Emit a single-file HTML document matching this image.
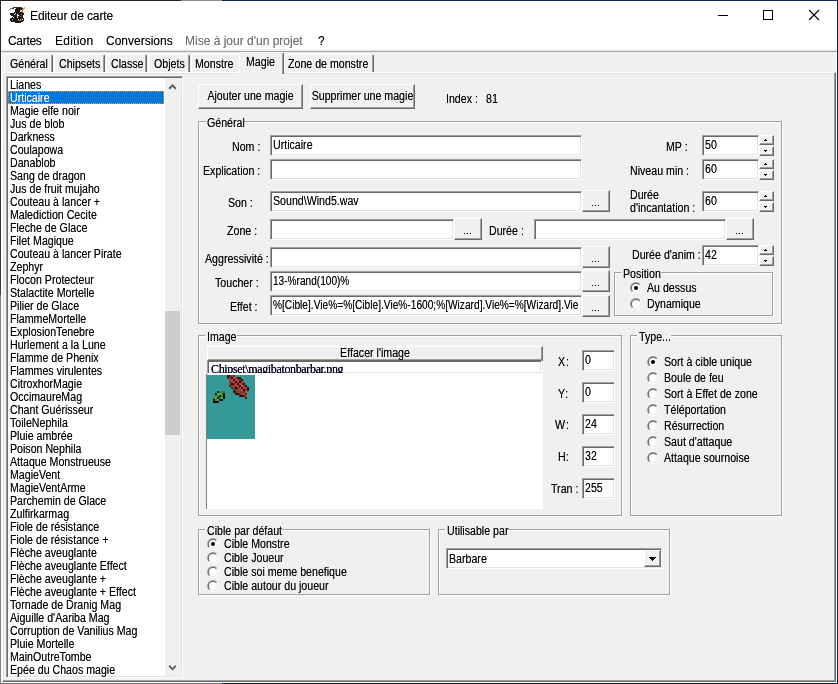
<!DOCTYPE html>
<html>
<head>
<meta charset="utf-8">
<title>Editeur de carte</title>
<style>
html,body{margin:0;padding:0;}
body{will-change:transform;width:838px;height:684px;overflow:hidden;position:relative;background:#f0f0f0;font-family:"Liberation Sans",sans-serif;color:#000;}
div,span{box-sizing:border-box;}
.a{position:absolute;}
/* text: emulate MS Sans Serif 8pt (taller & narrower than Liberation Sans) */
.t{position:absolute;white-space:pre;font-size:12.5px;line-height:13px;height:13px;transform:scaleX(.85);transform-origin:0 0;color:#000;text-shadow:0 0 0 rgba(0,0,0,.55);}
.tr{transform-origin:100% 0;}
/* sunken field */
.f{position:absolute;background:#fff;border:1px solid;border-color:#a0a0a0 #fff #fff #a0a0a0;box-shadow:inset 1px 1px 0 #696969,inset -1px -1px 0 #e3e3e3;overflow:hidden;}
.f .t{left:2px;top:3px;}
/* raised button */
.b{position:absolute;background:#f0f0f0;border:1px solid;border-color:#fff #696969 #696969 #fff;box-shadow:inset -1px -1px 0 #a0a0a0;overflow:hidden;}
.b .c{position:absolute;left:0;top:0;width:117.65%;text-align:center;transform:scaleX(.85);transform-origin:0 0;font-size:12.5px;line-height:13px;white-space:pre;text-shadow:0 0 0 rgba(0,0,0,.55);}
.dots{position:absolute;left:9px;top:14px;width:1px;height:1px;background:#000;box-shadow:3px 0 #000,6px 0 #000;}
/* etched group box */
.g{position:absolute;border:1px solid #a0a0a0;box-shadow:1px 1px 0 #fff,inset 1px 1px 0 #fff;}
.gl{position:absolute;background:#f0f0f0;height:13px;top:-8px;}
/* radio */
.r{position:absolute;width:12px;height:12px;border-radius:50%;background:linear-gradient(135deg,#a0a0a0 50%,#fff 50%);}
.r:before{content:"";position:absolute;left:1px;top:1px;width:10px;height:10px;border-radius:50%;background:linear-gradient(135deg,#696969 50%,#e3e3e3 50%);}
.r:after{content:"";position:absolute;left:2px;top:2px;width:8px;height:8px;border-radius:50%;background:#fff;}
.r i{position:absolute;left:4px;top:4px;width:4px;height:4px;border-radius:50%;background:#000;z-index:2;}
</style>
</head>
<body>
<!-- window frame -->
<div class="a" style="left:0;top:0;width:838px;height:1px;z-index:50;background:linear-gradient(to right,#2a2320 0,#2a2320 181px,#8c8c8c 181px,#8c8c8c 222px,#0d2759 222px)"></div>
<div class="a" style="left:0;top:683px;width:838px;height:1px;z-index:50;background:linear-gradient(to right,#707070 0,#707070 222px,#0b1f4b 222px)"></div>
<div class="a" style="left:0;top:0;width:1px;height:684px;z-index:50;background:linear-gradient(to bottom,#2c2420 0,#4a3c34 295px,#7f7f7f 295px)"></div>
<div class="a" style="left:837px;top:0;width:1px;height:684px;z-index:50;background:#0b1f4b"></div>
<!-- title + menu -->
<div class="a" style="left:1px;top:1px;width:836px;height:50px;background:#fff"></div>
<div class="a" style="left:1px;top:49px;width:836px;height:2px;background:#f0f0f0"></div>
<div class="a" style="left:1px;top:51px;width:836px;height:1px;background:#a0a0a0"></div>
<div class="a" id="title" style="left:30px;top:8px;font-size:12px;line-height:16px;white-space:pre;text-shadow:0 0 0 rgba(0,0,0,.45);letter-spacing:-0.1px">Editeur de carte</div>
<div class="a" style="left:8px;top:33px;font-size:12px;line-height:16px;white-space:pre;text-shadow:0 0 0 rgba(0,0,0,.45);letter-spacing:-0.3px">Cartes</div>
<div class="a" style="left:55px;top:33px;font-size:12px;line-height:16px;white-space:pre;text-shadow:0 0 0 rgba(0,0,0,.45);letter-spacing:0.25px">Edition</div>
<div class="a" style="left:106px;top:33px;font-size:12px;line-height:16px;white-space:pre;text-shadow:0 0 0 rgba(0,0,0,.45)">Conversions</div>
<div class="a" style="left:185px;top:33px;font-size:12px;line-height:16px;white-space:pre;text-shadow:0 0 0 rgba(109,109,109,.4);color:#6d6d6d">Mise à jour d'un projet</div>
<div class="a" style="left:318px;top:33px;font-size:12px;line-height:16px;white-space:pre;text-shadow:0 0 0 rgba(0,0,0,.45)">?</div>

<!-- window controls -->
<svg class="a" style="left:700px;top:0" width="138" height="31" viewBox="0 0 138 31" shape-rendering="crispEdges">
<rect x="18" y="15" width="10" height="1" fill="#000"/>
<rect x="63.5" y="10.5" width="9" height="9" fill="none" stroke="#000" stroke-width="1"/>
<g shape-rendering="auto" stroke="#000" stroke-width="1.1"><line x1="109" y1="10" x2="119" y2="20"/><line x1="119" y1="10" x2="109" y2="20"/></g>
</svg>
<!-- app icon -->
<svg class="a" style="left:9px;top:7px" width="16" height="16" viewBox="0 0 16 16" shape-rendering="crispEdges">
<rect x="4" y="0" width="9" height="1" fill="#4f2a14"/>
<rect x="15" y="0" width="1" height="1" fill="#f5a31f"/>
<rect x="1" y="1" width="2" height="1" fill="#8e8682"/>
<rect x="3" y="1" width="2" height="1" fill="#3a3431"/>
<rect x="7" y="1" width="6" height="1" fill="#1d1a19"/>
<rect x="13" y="1" width="1" height="1" fill="#3a3431"/>
<rect x="14" y="1" width="2" height="1" fill="#f5a31f"/>
<rect x="0" y="2" width="1" height="1" fill="#b9b3b0"/>
<rect x="1" y="2" width="1" height="1" fill="#8e8682"/>
<rect x="6" y="2" width="7" height="1" fill="#1d1a19"/>
<rect x="13" y="2" width="2" height="1" fill="#f5a31f"/>
<rect x="6" y="3" width="5" height="1" fill="#1d1a19"/>
<rect x="11" y="3" width="1" height="1" fill="#d8d4d2"/>
<rect x="12" y="3" width="1" height="1" fill="#ffffff"/>
<rect x="13" y="3" width="1" height="1" fill="#c56a1a"/>
<rect x="6" y="4" width="5" height="1" fill="#1d1a19"/>
<rect x="11" y="4" width="1" height="1" fill="#ffffff"/>
<rect x="12" y="4" width="1" height="1" fill="#d8d4d2"/>
<rect x="13" y="4" width="1" height="1" fill="#c56a1a"/>
<rect x="5" y="5" width="8" height="1" fill="#1d1a19"/>
<rect x="13" y="5" width="1" height="1" fill="#3a3431"/>
<rect x="1" y="6" width="5" height="1" fill="#1d1a19"/>
<rect x="6" y="6" width="1" height="1" fill="#ffffff"/>
<rect x="7" y="6" width="8" height="1" fill="#1d1a19"/>
<rect x="1" y="7" width="4" height="1" fill="#1d1a19"/>
<rect x="5" y="7" width="1" height="1" fill="#d8d4d2"/>
<rect x="6" y="7" width="2" height="1" fill="#1d1a19"/>
<rect x="8" y="7" width="1" height="1" fill="#ffffff"/>
<rect x="9" y="7" width="3" height="1" fill="#1d1a19"/>
<rect x="12" y="7" width="1" height="1" fill="#c56a1a"/>
<rect x="13" y="7" width="2" height="1" fill="#1d1a19"/>
<rect x="2" y="8" width="6" height="1" fill="#1d1a19"/>
<rect x="8" y="8" width="2" height="1" fill="#ffffff"/>
<rect x="10" y="8" width="4" height="1" fill="#1d1a19"/>
<rect x="4" y="9" width="4" height="1" fill="#1d1a19"/>
<rect x="8" y="9" width="1" height="1" fill="#d8d4d2"/>
<rect x="9" y="9" width="2" height="1" fill="#1d1a19"/>
<rect x="11" y="9" width="1" height="1" fill="#c56a1a"/>
<rect x="12" y="9" width="1" height="1" fill="#1d1a19"/>
<rect x="13" y="9" width="1" height="1" fill="#3a3431"/>
<rect x="3" y="10" width="1" height="1" fill="#1d1a19"/>
<rect x="4" y="10" width="1" height="1" fill="#d8d4d2"/>
<rect x="5" y="10" width="3" height="1" fill="#1d1a19"/>
<rect x="8" y="10" width="1" height="1" fill="#d8d4d2"/>
<rect x="9" y="10" width="5" height="1" fill="#1d1a19"/>
<rect x="1" y="11" width="14" height="1" fill="#1d1a19"/>
<rect x="1" y="12" width="2" height="1" fill="#1d1a19"/>
<rect x="3" y="12" width="1" height="1" fill="#d8d4d2"/>
<rect x="4" y="12" width="5" height="1" fill="#1d1a19"/>
<rect x="9" y="12" width="1" height="1" fill="#ffffff"/>
<rect x="10" y="12" width="1" height="1" fill="#1d1a19"/>
<rect x="11" y="12" width="2" height="1" fill="#c56a1a"/>
<rect x="13" y="12" width="1" height="1" fill="#ffffff"/>
<rect x="14" y="12" width="1" height="1" fill="#1d1a19"/>
<rect x="1" y="13" width="9" height="1" fill="#1d1a19"/>
<rect x="10" y="13" width="2" height="1" fill="#c56a1a"/>
<rect x="12" y="13" width="3" height="1" fill="#1d1a19"/>
<rect x="2" y="14" width="12" height="1" fill="#1d1a19"/>
<rect x="6" y="15" width="6" height="1" fill="#1d1a19"/>
</svg>
<!-- tab panel frame -->
<div class="a" style="left:1px;top:52px;width:1px;height:631px;background:#fff"></div>
<div class="a" style="left:836px;top:52px;width:1px;height:631px;background:#fff"></div>
<div class="a" style="left:1px;top:682px;width:836px;height:1px;background:#fff"></div>
<div class="a" style="left:2px;top:72px;width:834px;height:610px;border:1px solid;border-color:#fff #696969 #696969 #fff;box-shadow:inset -1px -1px 0 #a0a0a0,inset 1px 1px 0 #e3e3e3"></div>
<!-- tabs -->
<style>
.tb{position:absolute;top:54px;height:18px;border:1px solid;border-color:#fff #696969 transparent #fff;border-bottom:0;box-shadow:inset -1px 0 0 #a0a0a0;border-radius:2px 2px 0 0;background:#f0f0f0;}
.tb .t{top:3px;}
</style>
<div class="tb" style="left:4px;width:49px"><span class="t" style="left:5px">Général</span></div>
<div class="tb" style="left:54px;width:51px"><span class="t" style="left:4px">Chipsets</span></div>
<div class="tb" style="left:106px;width:41px"><span class="t" style="left:4px">Classe</span></div>
<div class="tb" style="left:148px;width:42px"><span class="t" style="left:5px">Objets</span></div>
<div class="tb" style="left:191px;width:50px"><span class="t" style="left:3px">Monstre</span></div>
<div class="tb" style="left:284px;width:90px"><span class="t" style="left:3px">Zone de monstre</span></div>
<div class="tb" style="left:239px;width:45px;top:52px;height:22px"><span class="t" style="left:6px">Magie</span></div>

<!-- list box -->
<style>
.li{position:relative;height:13px;width:156px;}
.li .t{left:2px;top:1px;}
.sel{background:#0078d7;outline:1px dotted #ff9a2e;outline-offset:-1px;}
.sel .t{color:#fff;text-shadow:0 0 0 rgba(255,255,255,.55);}
</style>
<div class="f" style="left:6px;top:76px;width:177px;height:602px">
<div class="a" style="left:1px;top:1px;width:157px;height:598px">
<div class="li"><span class="t">Lianes</span></div>
<div class="li sel"><span class="t">Urticaire</span></div>
<div class="li"><span class="t">Magie elfe noir</span></div>
<div class="li"><span class="t">Jus de blob</span></div>
<div class="li"><span class="t">Darkness</span></div>
<div class="li"><span class="t">Coulapowa</span></div>
<div class="li"><span class="t">Danablob</span></div>
<div class="li"><span class="t">Sang de dragon</span></div>
<div class="li"><span class="t">Jus de fruit mujaho</span></div>
<div class="li"><span class="t">Couteau à lancer +</span></div>
<div class="li"><span class="t">Malediction Cecite</span></div>
<div class="li"><span class="t">Fleche de Glace</span></div>
<div class="li"><span class="t">Filet Magique</span></div>
<div class="li"><span class="t">Couteau à lancer Pirate</span></div>
<div class="li"><span class="t">Zephyr</span></div>
<div class="li"><span class="t">Flocon Protecteur</span></div>
<div class="li"><span class="t">Stalactite Mortelle</span></div>
<div class="li"><span class="t">Pilier de Glace</span></div>
<div class="li"><span class="t">FlammeMortelle</span></div>
<div class="li"><span class="t">ExplosionTenebre</span></div>
<div class="li"><span class="t">Hurlement a la Lune</span></div>
<div class="li"><span class="t">Flamme de Phenix</span></div>
<div class="li"><span class="t">Flammes virulentes</span></div>
<div class="li"><span class="t">CitroxhorMagie</span></div>
<div class="li"><span class="t">OccimaureMag</span></div>
<div class="li"><span class="t">Chant Guérisseur</span></div>
<div class="li"><span class="t">ToileNephila</span></div>
<div class="li"><span class="t">Pluie ambrée</span></div>
<div class="li"><span class="t">Poison Nephila</span></div>
<div class="li"><span class="t">Attaque Monstrueuse</span></div>
<div class="li"><span class="t">MagieVent</span></div>
<div class="li"><span class="t">MagieVentArme</span></div>
<div class="li"><span class="t">Parchemin de Glace</span></div>
<div class="li"><span class="t">Zulfirkarmag</span></div>
<div class="li"><span class="t">Fiole de résistance</span></div>
<div class="li"><span class="t">Fiole de résistance +</span></div>
<div class="li"><span class="t">Flèche aveuglante</span></div>
<div class="li"><span class="t">Flèche aveuglante Effect</span></div>
<div class="li"><span class="t">Flèche aveuglante +</span></div>
<div class="li"><span class="t">Flèche aveuglante + Effect</span></div>
<div class="li"><span class="t">Tornade de Dranig Mag</span></div>
<div class="li"><span class="t">Aiguille d'Aariba Mag</span></div>
<div class="li"><span class="t">Corruption de Vanilius Mag</span></div>
<div class="li"><span class="t">Pluie Mortelle</span></div>
<div class="li"><span class="t">MainOutreTombe</span></div>
<div class="li"><span class="t">Epée du Chaos magie</span></div>
</div>
<div class="a" style="left:158px;top:1px;width:16px;height:598px;background:#f0f0f0">
<div class="a" style="left:0;top:233px;width:15px;height:124px;background:#cdcdcd"></div>
<svg class="a" style="left:0;top:0" width="16" height="17" viewBox="0 0 16 17"><polygon points="7.5,6 11.5,10 10.3,11.6 7.5,8.7 4.7,11.6 3.5,10" fill="#5c5c5c"/></svg>
<svg class="a" style="left:0;top:581px" width="16" height="17" viewBox="0 0 16 17"><polygon points="3.5,7.6 4.7,6 7.5,8.9 10.3,6 11.5,7.6 7.5,11.6" fill="#5c5c5c"/></svg>
</div>
</div>

<!-- top buttons -->
<div class="b" style="left:198px;top:84px;width:105px;height:25px"><span class="c" style="top:5px">Ajouter une magie</span></div>
<div class="b" style="left:310px;top:84px;width:105px;height:25px"><span class="c" style="top:5px">Supprimer une magie</span></div>
<span class="t" style="left:446px;top:93px">Index :</span>
<span class="t" style="left:486px;top:93px">81</span>

<!-- group: General -->
<div class="g" style="left:198px;top:121px;width:584px;height:203px"></div>
<div class="gl a" style="left:206px;top:116px;width:38px"></div>
<span class="t" style="left:207px;top:117px">Général</span>

<span class="t" style="left:232px;top:141px">Nom :</span>
<div class="f" style="left:270px;top:135px;width:312px;height:21px"><span class="t">Urticaire</span></div>
<span class="t" style="left:203px;top:165px">Explication :</span>
<div class="f" style="left:270px;top:159px;width:312px;height:21px"></div>
<span class="t" style="left:228px;top:197px">Son :</span>
<div class="f" style="left:270px;top:191px;width:312px;height:21px"><span class="t">Sound\Wind5.wav</span></div>
<div class="b" style="left:582px;top:190px;width:28px;height:22px"><i class="dots"></i></div>
<span class="t" style="left:227px;top:225px">Zone :</span>
<div class="f" style="left:270px;top:219px;width:184px;height:21px"></div>
<div class="b" style="left:454px;top:218px;width:28px;height:22px"><i class="dots"></i></div>
<span class="t" style="left:489px;top:225px">Durée :</span>
<div class="f" style="left:534px;top:219px;width:192px;height:21px"></div>
<div class="b" style="left:726px;top:218px;width:28px;height:22px"><i class="dots"></i></div>
<span class="t" style="left:205px;top:253px">Aggressivité :</span>
<div class="f" style="left:270px;top:247px;width:312px;height:21px"></div>
<div class="b" style="left:582px;top:246px;width:28px;height:22px"><i class="dots"></i></div>
<span class="t" style="left:215px;top:277px">Toucher :</span>
<div class="f" style="left:270px;top:271px;width:312px;height:21px"><span class="t" style="transform:scaleX(.808)">13-%rand(100)%</span></div>
<div class="b" style="left:582px;top:270px;width:28px;height:22px"><i class="dots"></i></div>
<span class="t" style="left:230px;top:301px">Effet :</span>
<div class="f" style="left:270px;top:295px;width:312px;height:21px"><span class="t" style="transform:scaleX(.813)">%[Cible].Vie%=%[Cible].Vie%-1600;%[Wizard].Vie%=%[Wizard].Vie</span></div>
<div class="b" style="left:582px;top:295px;width:28px;height:22px"><i class="dots"></i></div>

<!-- right column -->
<style>
.sp{position:absolute;width:15px;}
.sp .b{left:0;width:15px;height:10px;}
.sp .b:after{content:"";position:absolute;left:5px;width:1px;height:1px;background:#000;}
.sp .u:after{top:3px;box-shadow:-1px 1px #000,0 1px #000,1px 1px #000;}
.sp .d:after{top:4px;box-shadow:-1px -1px #000,0 -1px #000,1px -1px #000;}
</style>
<span class="t" style="left:666px;top:141px">MP :</span>
<div class="f" style="left:702px;top:135px;width:57px;height:21px"><span class="t">50</span></div>
<div class="sp" style="left:759px;top:135px"><div class="b u" style="top:0"></div><div class="b d" style="top:11px"></div></div>
<span class="t" style="left:630px;top:165px">Niveau min :</span>
<div class="f" style="left:702px;top:159px;width:57px;height:21px"><span class="t">60</span></div>
<div class="sp" style="left:759px;top:159px"><div class="b u" style="top:0"></div><div class="b d" style="top:11px"></div></div>
<span class="t" style="left:630px;top:189px">Durée</span>
<span class="t" style="left:630px;top:202px">d'incantation :</span>
<div class="f" style="left:702px;top:191px;width:57px;height:21px"><span class="t">60</span></div>
<div class="sp" style="left:759px;top:191px"><div class="b u" style="top:0"></div><div class="b d" style="top:11px"></div></div>
<span class="t" style="left:632px;top:249px">Durée d'anim :</span>
<div class="f" style="left:702px;top:245px;width:57px;height:21px"><span class="t">42</span></div>
<div class="sp" style="left:759px;top:245px"><div class="b u" style="top:0"></div><div class="b d" style="top:11px"></div></div>

<div class="g" style="left:614px;top:272px;width:159px;height:44px"></div>
<div class="gl a" style="left:621px;top:267px;width:40px"></div>
<span class="t" style="left:623px;top:268px">Position</span>
<div class="r" style="left:630px;top:282px"><i></i></div>
<span class="t" style="left:647px;top:282px">Au dessus</span>
<div class="r" style="left:630px;top:298px"></div>
<span class="t" style="left:647px;top:298px">Dynamique</span>

<!-- group: Image -->
<div class="g" style="left:198px;top:335px;width:424px;height:181px"></div>
<div class="gl a" style="left:205px;top:330px;width:32px"></div>
<span class="t" style="left:207px;top:331px">Image</span>
<div class="a" style="left:206px;top:374px;width:337px;height:135px;background:#fff;border-left:1px solid #808080"></div>
<div class="b" style="left:207px;top:346px;width:336px;height:15px"><span class="c" style="top:0px">Effacer l'image</span></div>
<div class="f" style="left:207px;top:360px;width:335px;height:14px;border-top-color:#696969"><span class="a" style="left:3px;top:1px;font-family:'Liberation Serif',serif;font-size:12px;line-height:15px;white-space:pre;color:#00001a;letter-spacing:-0.35px;text-shadow:0 0 0 #00002a">Chipset\magibatonbarbar.png</span></div>
<!-- sprite -->
<svg class="a" style="left:207px;top:375px" width="48" height="64" viewBox="0 0 24 32" shape-rendering="crispEdges">
<rect width="24" height="32" fill="#339999"/>
<rect x="10" y="0" width="1" height="1" fill="#4a0808"/>
<rect x="11" y="0" width="1" height="1" fill="#3f3a08"/>
<rect x="12" y="0" width="1" height="1" fill="#8c3c44"/>
<rect x="13" y="0" width="1" height="1" fill="#3f3a08"/>
<rect x="10" y="1" width="1" height="1" fill="#3f3a08"/>
<rect x="11" y="1" width="1" height="1" fill="#8c3c44"/>
<rect x="12" y="1" width="1" height="1" fill="#2a0000"/>
<rect x="13" y="1" width="1" height="1" fill="#d24444"/>
<rect x="14" y="1" width="1" height="1" fill="#8c3c44"/>
<rect x="15" y="1" width="2" height="1" fill="#4a0808"/>
<rect x="11" y="2" width="1" height="1" fill="#8c3c44"/>
<rect x="12" y="2" width="1" height="1" fill="#d24444"/>
<rect x="13" y="2" width="1" height="1" fill="#2a0000"/>
<rect x="14" y="2" width="1" height="1" fill="#d24444"/>
<rect x="15" y="2" width="1" height="1" fill="#8c3c44"/>
<rect x="16" y="2" width="1" height="1" fill="#3f3a08"/>
<rect x="17" y="2" width="1" height="1" fill="#4a0808"/>
<rect x="11" y="3" width="2" height="1" fill="#8c3c44"/>
<rect x="13" y="3" width="1" height="1" fill="#d24444"/>
<rect x="14" y="3" width="1" height="1" fill="#2a0000"/>
<rect x="15" y="3" width="1" height="1" fill="#d24444"/>
<rect x="16" y="3" width="1" height="1" fill="#2a0000"/>
<rect x="17" y="3" width="1" height="1" fill="#8c3c44"/>
<rect x="18" y="3" width="1" height="1" fill="#d24444"/>
<rect x="11" y="4" width="1" height="1" fill="#8c3c44"/>
<rect x="12" y="4" width="1" height="1" fill="#2a0000"/>
<rect x="13" y="4" width="1" height="1" fill="#3f3a08"/>
<rect x="14" y="4" width="1" height="1" fill="#d24444"/>
<rect x="15" y="4" width="1" height="1" fill="#2a0000"/>
<rect x="16" y="4" width="1" height="1" fill="#d24444"/>
<rect x="17" y="4" width="1" height="1" fill="#8c3c44"/>
<rect x="18" y="4" width="1" height="1" fill="#2a0000"/>
<rect x="11" y="5" width="1" height="1" fill="#3f3a08"/>
<rect x="12" y="5" width="3" height="1" fill="#8c3c44"/>
<rect x="15" y="5" width="1" height="1" fill="#d24444"/>
<rect x="16" y="5" width="1" height="1" fill="#2a0000"/>
<rect x="17" y="5" width="1" height="1" fill="#d24444"/>
<rect x="18" y="5" width="1" height="1" fill="#8c3c44"/>
<rect x="19" y="5" width="1" height="1" fill="#4a0808"/>
<rect x="12" y="6" width="1" height="1" fill="#3f3a08"/>
<rect x="13" y="6" width="1" height="1" fill="#8c3c44"/>
<rect x="14" y="6" width="1" height="1" fill="#2a0000"/>
<rect x="15" y="6" width="1" height="1" fill="#3f3a08"/>
<rect x="16" y="6" width="1" height="1" fill="#d24444"/>
<rect x="17" y="6" width="1" height="1" fill="#2a0000"/>
<rect x="18" y="6" width="1" height="1" fill="#d24444"/>
<rect x="19" y="6" width="1" height="1" fill="#8c3c44"/>
<rect x="20" y="6" width="1" height="1" fill="#4a0808"/>
<rect x="13" y="7" width="1" height="1" fill="#3f3a08"/>
<rect x="14" y="7" width="3" height="1" fill="#8c3c44"/>
<rect x="17" y="7" width="1" height="1" fill="#d24444"/>
<rect x="18" y="7" width="1" height="1" fill="#2a0000"/>
<rect x="19" y="7" width="1" height="1" fill="#8c3c44"/>
<rect x="20" y="7" width="1" height="1" fill="#4a0808"/>
<rect x="5" y="8" width="1" height="1" fill="#2a1030"/>
<rect x="6" y="8" width="3" height="1" fill="#4a7d33"/>
<rect x="13" y="8" width="1" height="1" fill="#4a0808"/>
<rect x="14" y="8" width="1" height="1" fill="#3f3a08"/>
<rect x="15" y="8" width="3" height="1" fill="#8c3c44"/>
<rect x="18" y="8" width="1" height="1" fill="#3f3a08"/>
<rect x="19" y="8" width="1" height="1" fill="#d24444"/>
<rect x="4" y="9" width="1" height="1" fill="#2a1030"/>
<rect x="5" y="9" width="2" height="1" fill="#33c446"/>
<rect x="7" y="9" width="1" height="1" fill="#4a7d33"/>
<rect x="8" y="9" width="1" height="1" fill="#2a1030"/>
<rect x="14" y="9" width="2" height="1" fill="#4a0808"/>
<rect x="16" y="9" width="1" height="1" fill="#3f3a08"/>
<rect x="17" y="9" width="1" height="1" fill="#8c3c44"/>
<rect x="18" y="9" width="1" height="1" fill="#d24444"/>
<rect x="19" y="9" width="1" height="1" fill="#3f3a08"/>
<rect x="4" y="10" width="2" height="1" fill="#4a7d33"/>
<rect x="6" y="10" width="1" height="1" fill="#2a1030"/>
<rect x="7" y="10" width="1" height="1" fill="#4a7d33"/>
<rect x="8" y="10" width="1" height="1" fill="#000000"/>
<rect x="16" y="10" width="3" height="1" fill="#4a0808"/>
<rect x="19" y="10" width="1" height="1" fill="#d24444"/>
<rect x="3" y="11" width="1" height="1" fill="#4a7d33"/>
<rect x="4" y="11" width="1" height="1" fill="#33c446"/>
<rect x="5" y="11" width="1" height="1" fill="#2a1030"/>
<rect x="6" y="11" width="1" height="1" fill="#4a7d33"/>
<rect x="7" y="11" width="1" height="1" fill="#33c446"/>
<rect x="8" y="11" width="1" height="1" fill="#000000"/>
<rect x="19" y="11" width="1" height="1" fill="#4a0808"/>
<rect x="3" y="12" width="1" height="1" fill="#2a1030"/>
<rect x="4" y="12" width="1" height="1" fill="#4a7d33"/>
<rect x="5" y="12" width="1" height="1" fill="#33c446"/>
<rect x="6" y="12" width="1" height="1" fill="#2a1030"/>
<rect x="7" y="12" width="1" height="1" fill="#000000"/>
<rect x="3" y="13" width="2" height="1" fill="#000000"/>
<rect x="5" y="13" width="1" height="1" fill="#2a1030"/>
</svg>
<span class="t" style="left:558px;top:356px;letter-spacing:1px">X:</span>
<div class="f" style="left:582px;top:350px;width:33px;height:21px"><span class="t">0</span></div>
<span class="t" style="left:558px;top:388px;letter-spacing:1px">Y:</span>
<div class="f" style="left:582px;top:382px;width:33px;height:21px"><span class="t">0</span></div>
<span class="t" style="left:555px;top:419px;letter-spacing:1.5px">W:</span>
<div class="f" style="left:582px;top:414px;width:33px;height:21px"><span class="t">24</span></div>
<span class="t" style="left:558px;top:451px">H:</span>
<div class="f" style="left:582px;top:446px;width:33px;height:21px"><span class="t">32</span></div>
<span class="t" style="left:551px;top:483px">Tran :</span>
<div class="f" style="left:582px;top:478px;width:33px;height:21px"><span class="t">255</span></div>

<!-- group: Type -->
<div class="g" style="left:630px;top:335px;width:152px;height:181px"></div>
<div class="gl a" style="left:637px;top:330px;width:34px"></div>
<span class="t" style="left:639px;top:331px">Type...</span>
<div class="r" style="left:647px;top:356px"><i></i></div><span class="t" style="left:664px;top:356px">Sort à cible unique</span>
<div class="r" style="left:647px;top:372px"></div><span class="t" style="left:664px;top:372px">Boule de feu</span>
<div class="r" style="left:647px;top:388px"></div><span class="t" style="left:664px;top:388px">Sort à Effet de zone</span>
<div class="r" style="left:647px;top:404px"></div><span class="t" style="left:664px;top:404px">Téléportation</span>
<div class="r" style="left:647px;top:420px"></div><span class="t" style="left:664px;top:420px">Résurrection</span>
<div class="r" style="left:647px;top:436px"></div><span class="t" style="left:664px;top:436px">Saut d'attaque</span>
<div class="r" style="left:647px;top:452px"></div><span class="t" style="left:664px;top:452px">Attaque sournoise</span>

<!-- group: Cible par defaut -->
<div class="g" style="left:198px;top:529px;width:232px;height:66px"></div>
<div class="gl a" style="left:205px;top:524px;width:77px"></div>
<span class="t" style="left:207px;top:525px">Cible par défaut</span>
<div class="r" style="left:207px;top:538px"><i></i></div><span class="t" style="left:224px;top:538px">Cible Monstre</span>
<div class="r" style="left:207px;top:552px"></div><span class="t" style="left:224px;top:552px">Cible Joueur</span>
<div class="r" style="left:207px;top:566px"></div><span class="t" style="left:224px;top:566px">Cible soi meme benefique</span>
<div class="r" style="left:207px;top:580px"></div><span class="t" style="left:224px;top:580px">Cible autour du joueur</span>

<!-- group: Utilisable par -->
<div class="g" style="left:438px;top:529px;width:232px;height:66px"></div>
<div class="gl a" style="left:445px;top:524px;width:63px"></div>
<span class="t" style="left:447px;top:525px">Utilisable par</span>
<div class="f" style="left:446px;top:548px;width:216px;height:21px"><span class="t" style="top:4px">Barbare</span>
<div class="b" style="left:197px;top:1px;width:17px;height:17px"><svg class="a" style="left:4px;top:6px" width="7" height="4" shape-rendering="crispEdges"><rect x="0" y="0" width="7" height="1"/><rect x="1" y="1" width="5" height="1"/><rect x="2" y="2" width="3" height="1"/><rect x="3" y="3" width="1" height="1"/></svg></div>
</div>
</body>
</html>
